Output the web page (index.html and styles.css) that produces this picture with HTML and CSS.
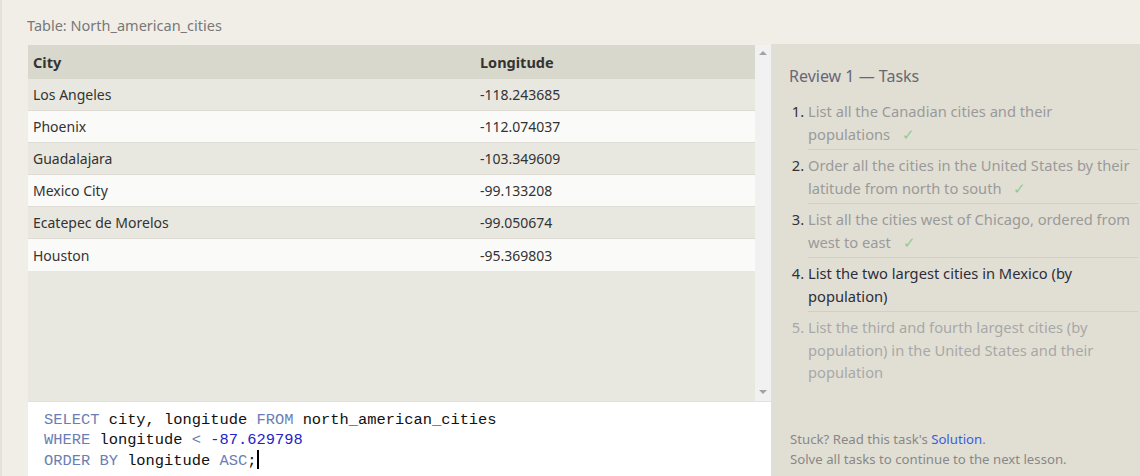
FILE: index.html
```html
<!DOCTYPE html>
<html>
<head>
<meta charset="utf-8">
<link rel="stylesheet" href="styles.css">
</head>
<body>
<div class="page">
  <div class="table-title">Table: North_american_cities</div>
  <div class="main">
    <div class="left">
      <div class="results">
        <div class="table-wrap">
          <div class="row head"><div class="c1">City</div><div class="c2">Longitude</div></div>
          <div class="row odd"><div class="c1">Los Angeles</div><div class="c2">-118.243685</div></div>
          <div class="row even"><div class="c1">Phoenix</div><div class="c2">-112.074037</div></div>
          <div class="row odd"><div class="c1">Guadalajara</div><div class="c2">-103.349609</div></div>
          <div class="row even"><div class="c1">Mexico City</div><div class="c2">-99.133208</div></div>
          <div class="row odd"><div class="c1">Ecatepec de Morelos</div><div class="c2">-99.050674</div></div>
          <div class="row even"><div class="c1">Houston</div><div class="c2">-95.369803</div></div>
        </div>
        <div class="scrollbar">
          <span class="arrow up"></span>
          <span class="arrow down"></span>
        </div>
      </div>
      <div class="editor">
        <div class="line"><span class="kw">SELECT</span> city, longitude <span class="kw">FROM</span> north_american_cities</div>
        <div class="line"><span class="kw">WHERE</span> longitude <span class="kw">&lt;</span> <span class="num">-87.629798</span></div>
        <div class="line"><span class="kw">ORDER BY</span> longitude <span class="kw">ASC</span>;<span class="cursor"></span></div>
      </div>
    </div>
    <div class="tasks">
      <div class="tasks-title">Review 1 — Tasks</div>
      <ol class="task-list">
        <li class="done">List all the Canadian cities and their populations <span class="check">✓</span></li>
        <li class="done">Order all the cities in the United States by their latitude from north to south <span class="check">✓</span></li>
        <li class="done">List all the cities west of Chicago, ordered from west to east <span class="check">✓</span></li>
        <li class="current">List the two largest cities in Mexico (by population)</li>
        <li class="todo">List the third and fourth largest cities (by population) in the United States and their population</li>
      </ol>
      <div class="help">
        <div>Stuck? Read this task's <span class="link">Solution</span>.</div>
        <div>Solve all tasks to continue to the next lesson.</div>
      </div>
    </div>
  </div>
</div>
</body>
</html>
```

FILE: styles.css
```css
* { box-sizing: border-box; }
html, body { margin: 0; padding: 0; }
body {
  background: #f0eee7;
  font-family: "Segoe UI", "Noto Sans", "Open Sans", sans-serif;
  width: 1140px;
  height: 476px;
  overflow: hidden;
}
.page {
  border-left: 2px solid #e4e1d8;
  height: 476px;
  display: flex;
  flex-direction: column;
}
.table-title {
  height: 44px;
  padding: 15px 0 0 25px;
  font-size: 14.5px;
  line-height: 20px;
  color: #787878;
}
.main {
  flex: 1;
  display: flex;
}
.left {
  margin-left: 26px;
  width: 743px;
  display: flex;
  flex-direction: column;
  padding-top: 1px;
}
.results {
  height: 356px;
  display: flex;
  background: #e9e8e0;
}
.table-wrap {
  flex: 1;
}
.row {
  display: flex;
  height: 32px;
  align-items: center;
  font-size: 14px;
  color: #333;
  border-bottom: 1px solid #dedcd5;
}
.row.head {
  height: 34px;
  background: #d9d8cc;
  font-weight: bold;
  border-bottom: none;
  font-size: 14.5px;
  padding-bottom: 1px;
}
.row.odd { background: #e9e8e0; }
.row.even { background: #fafaf9; }
.row.even:last-child { border-bottom: none; }
.c1 { width: 452px; padding-left: 5px; }
.c2 { flex: 1; }
.scrollbar {
  width: 16px;
  background: #f1f1f1;
  position: relative;
}
.arrow {
  position: absolute;
  left: 4px;
  width: 0; height: 0;
  border-left: 4px solid transparent;
  border-right: 4px solid transparent;
}
.arrow.up { top: 6px; border-bottom: 4px solid #a3a3a3; }
.arrow.down { bottom: 7px; border-top: 4px solid #a3a3a3; }
.editor {
  flex: 1;
  background: #ffffff;
  border-top: 1px solid #e2e1da;
  padding: 8px 0 0 16px;
  font-family: "Liberation Mono", "DejaVu Sans Mono", monospace;
  font-size: 15.4px;
  line-height: 20px;
  color: #111;
}
.line { white-space: pre; }
.kw { color: #6a7eb4; }
.num { color: #2323c8; }
.cursor {
  display: inline-block;
  width: 2px;
  height: 19px;
  background: #000;
  vertical-align: -4px;
  margin-left: 1px;
}
.tasks {
  flex: 1;
  background: #e1dfd4;
  padding: 21px 2px 0 18px;
  display: flex;
  flex-direction: column;
}
.tasks-title {
  font-size: 16px;
  line-height: 22px;
  color: #676774;
}
.task-list {
  margin: 9px 0 0 0;
  padding: 0 0 0 19px;
  font-size: 14.7px;
  line-height: 22.5px;
}
.task-list li {
  padding: 4px 0;
  border-bottom: 1px solid #d2d0c5;
}
.task-list li:last-child { border-bottom: none; }
.task-list li::marker { color: #333; }
.task-list li.done { color: #9a9a9a; }
.task-list li.current { color: #2d2d3a; }
.task-list li.todo { color: #a8a8a8; }
.task-list li.todo::marker { color: #a8a8a8; }
.check { color: #8fcc8f; margin-left: 8px; font-weight: 300; }
.help {
  margin-top: auto;
  padding-bottom: 7px;
  font-size: 13.2px;
  line-height: 20px;
  color: #888;
  margin-left: 1px;
}
.link { color: #3a5ce0; }
```
